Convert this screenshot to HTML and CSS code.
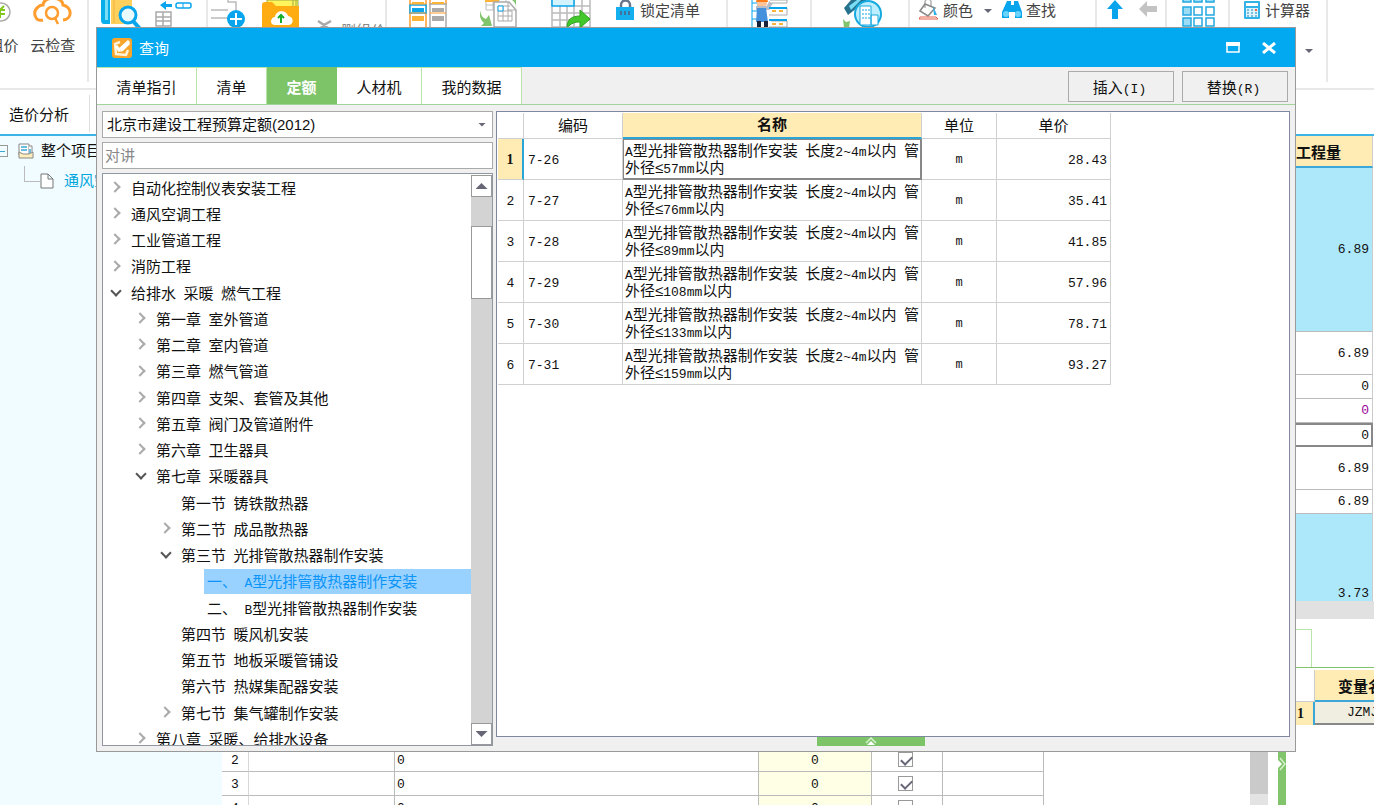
FILE: index.html
```html
<!DOCTYPE html>
<html lang="zh-CN">
<head>
<meta charset="utf-8">
<title>查询</title>
<link rel="stylesheet" href="styles.css">
</head>
<body>
<div class="app">
  <header class="ribbon">
    <div class="group g-check">
      <button class="big price"><svg width="20" height="28" viewBox="0 0 20 28"><circle cx="7" cy="12" r="9" fill="#fff" stroke="#aaa" stroke-width="1.500"/><path d="M2 10h9M2 14h9M3 6l3 4 4-4M6 10v8" stroke="#82c91e" stroke-width="2" fill="none"/></svg><span>组价</span></button>
      <button class="big"><svg width="40" height="28" viewBox="0 0 40 28"><path d="M10 20C2 22-1 12 5 7c2-2 4-2 5-2C10-4 30-4 30 5c9 2 10 14 0 15" fill="none" stroke="#ff9d2e" stroke-width="3"/><circle cx="19" cy="13" r="6" fill="none" stroke="#ff9d2e" stroke-width="2.500"/><path d="M22 18l3 6" stroke="#ff9d2e" stroke-width="2.500"/></svg><span>云检查</span></button>
    </div>
    <div class="group g-find">
      <svg width="40" height="28" viewBox="0 0 40 28"><path d="M0 0h9v24H3c-3 0-3-3-3-5z" fill="#08aeea"/><path d="M4 0h3v20H4z" fill="#7bdcf5"/><path d="M10 0h21v24H10z" fill="#ffd05c"/><path d="M13 0v23" stroke="#f3b33d"/><circle cx="27" cy="15" r="8" fill="#e9fbff" stroke="#08a5ed" stroke-width="3"/><path d="M32 21l7 8" stroke="#08a5ed" stroke-width="4"/></svg>
      <svg width="38" height="28" viewBox="0 0 38 28"><path d="M5 5l6-4v3h6v3h-6v3z" fill="#08a5ed"/><rect x="21" y="3" width="15" height="5" rx="2" fill="none" stroke="#08a5ed" stroke-width="1.500"/><path d="M28 3v5" stroke="#08a5ed"/><path d="M1 12h15v14H1zM8 12v14M1 17h15M1 21h15" fill="none" stroke="#aaa" stroke-width="1.500"/></svg>
    </div>
    <div class="group g-add">
      <svg width="36" height="28" viewBox="0 0 36 28"><path d="M2 0h20l5 7v15H2z" fill="#fff"/><path d="M27 14V2h-8V0M2 10h17M2 18h16" stroke="#bbb" fill="none" stroke-width="1.500"/><circle cx="27" cy="19" r="9" fill="#08a5ed"/><path d="M21 19h12M27 13v12" stroke="#fff" stroke-width="2"/></svg>
      <svg width="38" height="28" viewBox="0 0 38 28"><path d="M5 0h31v10H5z" fill="#fff45c" stroke="#99a944"/><path d="M31 0v7M34 0v7" stroke="#99a944"/><path d="M0 5q0-3 3-3h7l4 4h23v22H0z" fill="#ffac12"/><path d="M12 25c-5-1-3-8 1-8 1-8 12-7 13-1 6 0 6 9 1 9z" fill="#fff"/><path d="M19 23v-7M16 18l3-3 3 3" stroke="#16ae2a" stroke-width="2" fill="none"/></svg>
      <span class="sunk"><svg width="16" height="8" viewBox="0 0 16 8"><path d="M1 1l6 4 7-4M7 5l-3 3M7 5l4 3" stroke="#aaa" stroke-width="2.500" fill="none"/></svg><span>删组价</span></span>
    </div>
    <div class="group g-tools">
      <svg width="38" height="28" viewBox="0 0 38 28"><g fill="#fff" stroke="#ff9d2e" stroke-width="1.500"><path d="M1 -2h16v31H1zM21 -2h16v6H21z"/></g><path d="M21 4h16v25H21z" fill="#fff" stroke="#aaa" stroke-width="1.500"/><path d="M1 5h16v8H1z" fill="#fff" stroke="#08a5ed" stroke-width="1.500"/><path d="M1 4h16M21 13h16M1 13h16" stroke="#ff9d2e"/><path d="M3 2h12v2H3zM23 2h12v2H23zM3 16h12v5H3z" fill="#fbb437"/><path d="M3 8h12v4H3z" fill="#08a5ed"/><path d="M23 8h12v4H23zM23 16h12v5H23z" fill="#aaa"/></svg>
      <svg width="38" height="28" viewBox="0 0 38 28"><path d="M6 -1h20v11H6zM6 5h20M13 0v10M19 0v10" fill="#fff" stroke="#bbb"/><path d="M5 0h14v2H5z" fill="#fbb437"/><path d="M14 2h15l7 8v17H14z" fill="#fff" stroke="#aaa" stroke-width="1.500"/><path d="M28 2v8h8M18 6h12M18 11h14M18 16h14M18 21h14M18 6v15M23 6v15M28 9v12M32 11v10" fill="none" stroke="#aaa"/><path d="M18 6h5v5h-5z" fill="#fff" stroke="#08a5ed"/><path d="M0 10c1 6 3 8 6 9l3-4 3 11H1l3-3C0 20-1 14 0 10zM32 0q4 3 4 7V0z" fill="#82c46c"/></svg>
      <svg width="42" height="28" viewBox="0 0 42 28"><path d="M1 -1h38v28H1zM1 13h38M1 20h38M23 6h16M9 6v21M16 6v21M23 0v27M31 0v27" fill="#fff" stroke="#bbb" stroke-width="1.500"/><path d="M1 -1h22v7H1z" fill="#d3f4ff" stroke="#08a5ed" stroke-width="1.500"/><path d="M16 28c0-9 5-12 13-12v-6l10 9-10 9v-6c-5 0-9 1-13 6z" fill="#43c72c" stroke="#2ca51c"/></svg>
      <button class="tool"><svg width="18" height="20" viewBox="0 0 18 20"><path d="M5 8V5c0-6 9-6 9 0v3" stroke="#68758a" stroke-width="2.500" fill="none"/><rect y="7" width="18" height="13" fill="#13afee"/><path d="M4 11h2v4H4zM8 11h2v4H8zM12 11h2v4h-2z" fill="#41729b"/></svg><span>锁定清单</span></button>
    </div>
    <div class="group g-worker">
      <svg width="40" height="28" viewBox="0 0 40 28"><path d="M1 0v27M7 0v27M1 3h8M1 11h8M1 19h8" stroke="#08a5ed"/><circle cx="11" cy="3" r="5" fill="#ffc39a"/><path d="M5 2c0-6 12-6 12 0z" fill="#ff7d18"/><path d="M5 8h12l3-6" stroke="#b9bdca" stroke-width="4" fill="none"/><path d="M6 8h9l2 14H5z" fill="#4391dc"/><path d="M6 21h4v6H6zM13 21h4v6h-4z" fill="#18233a"/><path d="M19 0h17v3H19M20 8h16v7H18M20 21h16v6H18" fill="#fff" stroke="#aaa"/><path d="M18 8h18M18 20h18" stroke="#08a5ed" stroke-width="2"/><path d="M21 11h4M28 11h4M21 24h4M28 24h4" stroke="#fbb437" stroke-width="2"/></svg>
    </div>
    <div class="group g-build">
      <svg width="40" height="28" viewBox="0 0 40 28"><path d="M1 8L8 0h16L5 15z" fill="#27718d"/><path d="M6 6l8-6h4L8 10z" fill="#79ddf6"/><circle cx="25" cy="14" r="13" fill="#bbeeff" stroke="#16a9df" stroke-width="2"/><path d="M17 6h11v19H17zM28 15h7v10h-7z" fill="#fff" stroke="#16a9df"/><path d="M20 9v10M23 9v10M26 9v10" stroke="#16a9df" stroke-dasharray="2 2"/><path d="M0 19l3 3 4-1-1 7H1z" fill="#82c46c"/></svg>
    </div>
    <div class="group g-color">
      <button class="tool"><svg width="20" height="20" viewBox="0 0 20 20"><path d="M6 4L1 11l8 5 7-8z" fill="#fff" stroke="#888" stroke-width="1.500"/><path d="M6 8V1c0-2 6-2 6 0v6" fill="none" stroke="#888"/><path d="M14 6l4 9h-3z" fill="#2eaee8"/><path d="M1 17h16l2 2H0z" fill="#fff" stroke="#e35f4a"/></svg><span>颜色</span></button>
      <i class="caret"></i>
      <button class="tool"><svg width="20" height="18" viewBox="0 0 20 18"><path d="M5 0h4v4h3V0h4l4 11v6h-7v-6H7v6H0v-6z" fill="#08a5ed"/><circle cx="4" cy="13" r="3" fill="#6bd4fa"/><circle cx="16" cy="13" r="3" fill="#6bd4fa"/></svg><span>查找</span></button>
    </div>
    <div class="group g-arrows">
      <svg width="18" height="20" viewBox="0 0 18 20"><path d="M9 0l8 9h-5v10H6V9H1z" fill="#08a5ed"/></svg>
      <svg width="20" height="20" viewBox="0 0 20 20"><path d="M1 9l8-8v5h10v6H9v5z" fill="#c3c3c3"/></svg>
    </div>
    <div class="group g-grid">
      <svg width="33" height="28" viewBox="0 0 33 28"><g fill="#fff" stroke="#23a8e1" stroke-width="1.500"><path d="M1 -4h8v6H1z" fill="#9bdcf6"/><path d="M12 -4h8v6h-8zM24 -4h8v6h-8z" fill="#9bdcf6"/><rect x="1" y="7" width="8" height="8" fill="#9bdcf6"/><rect x="12" y="7" width="8" height="8"/><rect x="24" y="7" width="8" height="8"/><rect x="1" y="18" width="8" height="8" fill="#9bdcf6"/><rect x="12" y="18" width="8" height="8"/><rect x="24" y="18" width="8" height="8"/></g></svg>
    </div>
    <div class="group g-calc">
      <button class="tool"><svg width="16" height="18" viewBox="0 0 16 18"><rect width="16" height="18" rx="1" fill="#33b2e8"/><path d="M2 2h12v3H2z" fill="#fff"/><path d="M2 7h12v9H2z" fill="#ddf5ff"/><path d="M3 9h10M3 12h10M3 15h10" stroke="#2183b9" stroke-dasharray="2 2"/><path d="M11 8h2v2h-2z" fill="#ea5a49"/></svg><span>计算器</span></button>
      <i class="caret more"></i>
    </div>
  </header>
  <nav class="subtabs"><button>造价分析</button></nav>
  <main class="workspace">
    <aside class="project">
      <div class="node"><i class="minus"></i><svg width="16" height="16" viewBox="0 0 16 16"><path d="M1 1h10v11H1z" fill="#fff" stroke="#888"/><path d="M11 3h3v9h-3" fill="#fff" stroke="#888"/><path d="M3 4h6M3 7h6M12 6v4" stroke="#3aa7d8" stroke-width="1.500"/><path d="M1 9v6h14V9l-4 2H5z" fill="#fff0bb" stroke="#888"/></svg><span>整个项目</span></div>
      <div class="node child"><i class="elbow"></i><svg width="14" height="16" viewBox="0 0 14 16"><path d="M1 1h7l5 5v9H1zM8 1v5h5" fill="#fff" stroke="#777"/></svg><span>通风空调</span></div>
    </aside>
    <section class="sheets">
      <table class="quantity">
        <tr class="qh"><th>工程量</th></tr>
        <tr class="q-tall"><td>6.89</td></tr>
        <tr class="q-mid"><td>6.89</td></tr>
        <tr class="q-low"><td>0</td></tr>
        <tr class="q-low purple"><td>0</td></tr>
        <tr class="q-low current"><td>0</td></tr>
        <tr class="q-mid"><td>6.89</td></tr>
        <tr class="q-low"><td>6.89</td></tr>
        <tr class="q-last"><td>3.73</td></tr>
      </table>
      <div class="hscroll"></div>
      <div class="lower">
        <div class="detail">
          <table class="lines">
            <colgroup><col class="l1"><col class="l2"><col class="l3"><col class="l4"><col class="l5"><col class="l6"></colgroup>
            <tr><th>2</th><td></td><td>0</td><td class="amount">0</td><td class="tick"><input type="checkbox" checked aria-label="第2行"></td><td></td></tr>
            <tr><th>3</th><td></td><td>0</td><td class="amount">0</td><td class="tick"><input type="checkbox" checked aria-label="第3行"></td><td></td></tr>
            <tr><th>4</th><td></td><td>0</td><td class="amount">0</td><td class="tick"><input type="checkbox" checked aria-label="第4行"></td><td></td></tr>
          </table>
          <div class="vscroll"><i></i></div>
          <button class="splitter" aria-label="展开"><svg width="8" height="14" viewBox="0 0 8 14"><path d="M0 3l4 4-4 4z" fill="#fff"/><path d="M2 1l5 6-5 6" fill="none" stroke="#d5f2cb" stroke-width="1.500"/></svg></button>
        </div>
        <div class="variables">
          <div class="vtab"></div>
          <table class="vars">
            <tr><th class="corner"></th><th class="vname">变量名</th></tr>
            <tr><th class="vnum">1</th><td>JZMJ</td></tr>
          </table>
        </div>
      </div>
    </section>
  </main>
</div>

<div class="dialog" role="dialog" aria-label="查询">
  <div class="titlebar">
    <svg width="20" height="20" viewBox="0 0 20 20"><rect width="20" height="20" rx="3" fill="#f7a52b"/><path d="M8 4L3 6l1 10 10 1 2-5" fill="none" stroke="#fff3da" stroke-width="2.500"/><path d="M4 8l3 4L17 3" fill="none" stroke="#fff" stroke-width="3"/><path d="M8 14l2-4 7-6 1 2-7 7z" fill="#fff"/></svg>
    <span class="title">查询</span>
    <button class="win" aria-label="最大化"><svg width="14" height="12" viewBox="0 0 14 12"><path d="M1 1h12v9H1z" fill="none" stroke="#fff" stroke-width="1.500"/><path d="M0 0h14v4H0z" fill="#fff"/></svg></button>
    <button class="win" aria-label="关闭"><svg width="14" height="12" viewBox="0 0 14 12"><path d="M1 1l12 10M13 1L1 11" stroke="#fff" stroke-width="3"/></svg></button>
  </div>
  <div class="tabbar">
    <button class="tab t100">清单指引</button><button class="tab t70">清单</button><button class="tab t70 active">定额</button><button class="tab t84">人材机</button><button class="tab t100">我的数据</button>
    <div class="actions"><button>插入<span class="key">(I)</span></button><button>替换<span class="key">(R)</span></button></div>
  </div>
  <div class="content">
    <div class="catalog">
      <div class="picker"><select aria-label="定额库"><option>北京市建设工程预算定额(2012)</option></select><i class="caret"></i></div>
      <input class="search" type="text" placeholder="对讲" aria-label="搜索">
      <div class="treebox">
        <ul class="tree">
          <li><i class="arrow"></i>自动化控制仪表安装工程</li>
          <li><i class="arrow"></i>通风空调工程</li>
          <li><i class="arrow"></i>工业管道工程</li>
          <li><i class="arrow"></i>消防工程</li>
          <li><i class="arrow open"></i>给排水&ensp;采暖&ensp;燃气工程</li>
          <li class="d1"><i class="arrow"></i>第一章&ensp;室外管道</li>
          <li class="d1"><i class="arrow"></i>第二章&ensp;室内管道</li>
          <li class="d1"><i class="arrow"></i>第三章&ensp;燃气管道</li>
          <li class="d1"><i class="arrow"></i>第四章&ensp;支架、套管及其他</li>
          <li class="d1"><i class="arrow"></i>第五章&ensp;阀门及管道附件</li>
          <li class="d1"><i class="arrow"></i>第六章&ensp;卫生器具</li>
          <li class="d1"><i class="arrow open"></i>第七章&ensp;采暖器具</li>
          <li class="d2"><i class="arrow none"></i>第一节&ensp;铸铁散热器</li>
          <li class="d2"><i class="arrow"></i>第二节&ensp;成品散热器</li>
          <li class="d2"><i class="arrow open"></i>第三节&ensp;光排管散热器制作安装</li>
          <li class="d3"><span class="leaf selected">一、&ensp;<b>A</b>型光排管散热器制作安装</span></li>
          <li class="d3"><span class="leaf">二、&ensp;<b>B</b>型光排管散热器制作安装</span></li>
          <li class="d2"><i class="arrow none"></i>第四节&ensp;暖风机安装</li>
          <li class="d2"><i class="arrow none"></i>第五节&ensp;地板采暖管铺设</li>
          <li class="d2"><i class="arrow none"></i>第六节&ensp;热媒集配器安装</li>
          <li class="d2"><i class="arrow"></i>第七节&ensp;集气罐制作安装</li>
          <li class="d1"><i class="arrow"></i>第八章&ensp;采暖、给排水设备</li>
        </ul>
        <div class="bar"><button class="step up" aria-label="向上"></button><i class="thumb"></i><button class="step down" aria-label="向下"></button></div>
      </div>
    </div>
    <div class="results">
      <div class="pane">
        <table class="quota">
          <colgroup><col class="c1"><col class="c2"><col class="c3"><col class="c4"><col class="c5"></colgroup>
          <thead><tr><th></th><th>编码</th><th class="lead">名称</th><th>单位</th><th>单价</th></tr></thead>
          <tbody>
            <tr class="on"><th>1</th><td>7-26</td><td class="name"><span>A</span>型光排管散热器制作安装&ensp;长度<span>2~4m</span>以内&ensp;管外径≤<span>57mm</span>以内</td><td class="unit">m</td><td class="cost">28.43</td></tr>
            <tr><th>2</th><td>7-27</td><td class="name"><span>A</span>型光排管散热器制作安装&ensp;长度<span>2~4m</span>以内&ensp;管外径≤<span>76mm</span>以内</td><td class="unit">m</td><td class="cost">35.41</td></tr>
            <tr><th>3</th><td>7-28</td><td class="name"><span>A</span>型光排管散热器制作安装&ensp;长度<span>2~4m</span>以内&ensp;管外径≤<span>89mm</span>以内</td><td class="unit">m</td><td class="cost">41.85</td></tr>
            <tr><th>4</th><td>7-29</td><td class="name"><span>A</span>型光排管散热器制作安装&ensp;长度<span>2~4m</span>以内&ensp;管外径≤<span>108mm</span>以内</td><td class="unit">m</td><td class="cost">57.96</td></tr>
            <tr><th>5</th><td>7-30</td><td class="name"><span>A</span>型光排管散热器制作安装&ensp;长度<span>2~4m</span>以内&ensp;管外径≤<span>133mm</span>以内</td><td class="unit">m</td><td class="cost">78.71</td></tr>
            <tr><th>6</th><td>7-31</td><td class="name"><span>A</span>型光排管散热器制作安装&ensp;长度<span>2~4m</span>以内&ensp;管外径≤<span>159mm</span>以内</td><td class="unit">m</td><td class="cost">93.27</td></tr>
          </tbody>
        </table>
      </div>
      <button class="handle" aria-label="展开"><svg width="12" height="8" viewBox="0 0 12 8"><path d="M1 6l5-5 5 5" fill="none" stroke="#d5f2cb" stroke-width="1.500"/><path d="M2 8l4-4 4 4z" fill="#fff"/></svg></button>
    </div>
  </div>
</div>
</body>
</html>
```

FILE: styles.css
```css
* { box-sizing: border-box; }
html, body { margin: 0; height: 100%; overflow: hidden; }
body, button, input, select {
  font-family: "Liberation Sans", "Noto Sans CJK SC", sans-serif;
  font-size: 15px;
  color: #111;
}
button { padding: 0; border: 0; background: none; }
svg { display: block; flex: none; }
table { border-collapse: separate; border-spacing: 0; table-layout: fixed; }
th, td { padding: 0; font-weight: normal; }

.app { height: 100vh; display: flex; flex-direction: column; background: #fff; overflow: hidden; }

/* ribbon */
.ribbon { display: flex; flex: none; height: 90px; border-bottom: 2px solid #e8e8e8; overflow: hidden; }
.ribbon button, .sunk { color: #444; }
.group { display: flex; align-items: flex-start; flex: none; height: 82px; border-right: 2px solid #e8e8e8; }
.g-check { width: 89px; }
.big { display: flex; flex-direction: column; align-items: center; gap: 7px; width: 70px; line-height: 22px; white-space: nowrap; }
.big.price { width: 19px; align-items: flex-end; overflow: hidden; }
.price svg { margin-right: 5px; }
.g-find { width: 119px; padding-left: 12px; gap: 14px; }
.g-add { width: 179px; padding-left: 1px; gap: 17px; }
.sunk { display: flex; align-items: flex-start; gap: 8px; padding-top: 20px; color: #888; line-height: 22px; white-space: nowrap; }
.g-tools { width: 341px; padding-left: 22px; gap: 33px; }
.tool { display: flex; align-items: center; gap: 6px; height: 20px; line-height: 20px; white-space: nowrap; }
.tool span { padding-top: 2px; }
.g-tools .tool { margin-left: -10px; }
.g-worker { width: 84px; padding-left: 23px; }
.g-build { width: 98px; padding-left: 31px; }
.g-color { width: 187px; padding-left: 9px; gap: 9px; }
.g-color .tool { gap: 4px; }
.g-arrows { width: 70px; padding-left: 9px; gap: 14px; }
.g-grid { width: 63px; padding-left: 15px; }
.g-calc { width: 98px; padding-left: 14px; }
.g-calc .tool { gap: 5px; }
.caret { width: 8px; height: 4px; background: #667; clip-path: polygon(0 0, 100% 0, 50% 100%); }
.g-color .caret { margin-top: 9px; margin-left: 2px; margin-right: 1px; }
.more { margin-top: 49px; margin-left: -5px; }

.subtabs { flex: none; height: 44px; padding-top: 5px; }
.subtabs button { width: 90px; height: 37px; padding-right: 11px; border-right: 1px solid #ddd; }
.workspace { display: flex; flex: 1; min-height: 0; border-top: 2px solid #3db4e8; }
.project { flex: none; width: 222px; background: #f0fcff; }
.node { display: flex; align-items: center; height: 30px; gap: 7px; white-space: nowrap; }
.node span { padding-bottom: 3px; }
.minus { width: 8px; height: 12px; margin-right: 3px; border: 1px solid #999; border-left: 0; background: linear-gradient(#3aa7d8, #3aa7d8) 0 5px / 5px 1px no-repeat; }
.child { gap: 10px; color: #00a5dc; }
.elbow { width: 16px; height: 16px; margin-left: 24px; margin-top: -14px; border-left: 1px solid #bbb; border-bottom: 1px solid #bbb; }
.child svg { margin-left: -10px; }

.sheets { flex: 1; min-width: 0; display: flex; flex-direction: column; }
.quantity { width: 108px; margin: 0 1px 0 auto; }
.quantity th { height: 32px; font-weight: bold; background: #ffebb4; border-bottom: 2px solid #3aa7d8; border-right: 1px solid #ccc; }
.quantity td, .lines, .vars td, .quota tbody { font-family: "Liberation Mono", "Noto Sans CJK SC", monospace; font-size: 13px; }
.quantity td { padding-right: 3px; text-align: right; border-bottom: 1px solid #bbb; border-right: 1px solid #ccc; }
.q-tall td { height: 164px; background: #ade8fa; }
.q-mid td { height: 43px; }
.q-low td { height: 24px; }
.quantity .q-last td { height: 87px; padding-top: 72px; line-height: 14px; background: #ade8fa; border-bottom: 0; }
.quantity .purple td { color: #909; }
.quantity .current td { border: 2px solid #888; padding-right: 2px; }
.hscroll { flex: none; height: 18px; background: #e1e1e1; }
.lower { display: flex; flex: 1; min-height: 0; }
.detail { display: flex; flex: 1; padding-top: 129px; overflow: hidden; }
.lines { width: 822px; flex: none; }
.l1 { width: 27px; } .l2 { width: 146px; } .l3 { width: 364px; } .l4 { width: 113px; } .l5 { width: 71px; } .l6 { width: 101px; }
.lines th, .lines td { height: 24px; padding-top: 2px; border-right: 1px solid #bbb; border-bottom: 1px solid #bbb; }
.lines td { padding-left: 2px; }
.lines th { border-right-color: #d8d8d8; }
.lines .amount { background: #ffffe6; text-align: center; padding-left: 0; }
.lines .tick { padding: 0 4px 0 0; }
.tick input { appearance: none; display: block; width: 15px; height: 15px; margin: 0 auto; border: 1px solid #999; background: #fff; }
.tick input:checked::before { content: ""; display: block; width: 9px; height: 5px; margin: 3px 2px; border-left: 2px solid #667; border-bottom: 2px solid #667; transform: rotate(-45deg); }
.vscroll { width: 18px; height: 100%; margin-left: auto; background: #e3e3e3; }
.vscroll i { display: block; height: 46px; background: #cacaca; }
.splitter { display: flex; align-items: flex-start; width: 8px; height: 100%; margin-left: 10px; padding-top: 9px; background: #82c46c; }
.variables { flex: none; width: 88px; padding-top: 10px; overflow: hidden; }
.vtab { width: 26px; height: 38px; border: 1px solid #b9e5a8; border-bottom: 0; }
.vars { width: 120px; border-top: 1px solid #82c46c; padding-top: 2px; }
.corner { width: 29px; height: 32px; border-bottom: 1px solid #ccc; border-right: 1px solid #ccc; }
.vname { font-weight: bold; background: #ffebb4; border-bottom: 2px solid #3aa7d8; }
.vnum { height: 23px; padding-left: 2px; font: bold 14px "Liberation Serif", serif; background: #ffebb4; border-right: 2px solid #3aa7d8; }
.vars td { padding-left: 4px; text-align: center; background: #efeee0; border-bottom: 2px solid #888; }

/* dialog */
.dialog { position: absolute; left: 96px; top: 27px; right: 78px; bottom: 53px; display: flex; flex-direction: column; background: #f0f0f0; border: 1px solid #999; }
.titlebar { display: flex; align-items: center; flex: none; height: 39px; padding: 0 19px 0 15px; background: #02a9f1; color: #fff; }
.title { flex: 1; margin-left: 7px; }
.win { margin-left: 22px; }
.tabbar { display: flex; flex: none; height: 38px; border-bottom: 1px solid #a3d39c; }
.tab { border-right: 1px solid #b9e5a8; border-top: 1px solid #b9e5a8; background: #fff; }
.t100 { width: 100px; } .t70 { width: 70px; } .t84 { width: 85px; }
.tab.active { background: #7dc368; color: #fff; font-weight: bold; border-color: #7dc368; }
.actions { display: flex; gap: 8px; margin-left: auto; padding: 4px 7px 2px 0; }
.actions button { width: 106px; padding-right: 3px; border: 1px solid #aaa; }
.key { font: 13px "Liberation Mono", monospace; }
.content { display: flex; flex: 1; min-height: 0; gap: 3px; padding: 6px 5px 5px; }
.catalog { display: flex; flex-direction: column; flex: none; width: 391px; gap: 4px; }
.picker { display: flex; align-items: center; flex: none; height: 27px; padding-right: 6px; border: 1px solid #aaa; background: #fff; }
.picker select { flex: 1; appearance: none; height: 24px; padding: 0 0 0 4px; border: 0; background: #fff; }
.search { flex: none; height: 27px; padding: 0 2px; border: 1px solid #aaa; background: #fff; }
.search::placeholder { color: #888; }
.treebox { display: flex; flex: 1; min-height: 0; padding: 1px 0 0 1px; border: 1px solid #8f97a3; background: #fff; }
.tree { flex: 1; height: 100%; margin: 0; padding: 0; list-style: none; overflow: hidden; }
.tree li { display: flex; align-items: center; height: 26px; padding: 0 0 2px 4px; white-space: nowrap; }
.tree li:nth-child(4n) { height: 27px; }
.tree .d1 { padding-left: 29px; }
.tree .d2 { padding-left: 54px; }
.tree .d3 { padding: 0 0 0 100px; }
.tree b { font: 13px "Liberation Mono", monospace; }
.arrow { flex: none; width: 8px; height: 8px; margin: 0 12px 0 3px; border-top: 2px solid #aaa; border-right: 2px solid #aaa; transform: rotate(45deg); }
.arrow.open { margin: -3px 11px 0 4px; border-color: #555; transform: rotate(135deg); }
.arrow.none { visibility: hidden; }
.leaf { flex: 1; height: 25px; line-height: 25px; padding-left: 3px; }
.selected { background: #99d1ff; color: #0c95f8; }
.bar { display: flex; flex-direction: column; flex: none; width: 21px; background: #d3d3d3; }
.step { height: 22px; border: 1px solid #999; background: #fff; }
.step::before { content: ""; display: block; width: 12px; height: 6px; margin: 0 auto; background: #667; clip-path: polygon(50% 0, 100% 100%, 0 100%); }
.step.down { margin-top: auto; }
.step.down::before { clip-path: polygon(0 0, 100% 0, 50% 100%); }
.thumb { height: 73px; margin-top: 29px; border: 1px solid #999; background: #fff; }

.results { display: flex; flex: 1; flex-direction: column; min-width: 0; }
.pane { flex: 1; min-height: 0; padding: 1px; border: 1px solid #8088a0; background: #fff; overflow: hidden; }
.handle { display: flex; justify-content: center; flex: none; width: 108px; height: 9px; margin-left: 321px; background: #7dc368; }
.quota { width: 613px; }
.c1 { width: 26px; } .c2 { width: 99px; } .c3 { width: 299px; } .c4 { width: 75px; } .c5 { width: 114px; }
.quota th, .quota td { border-right: 1px solid #d0d0d0; border-bottom: 1px solid #d0d0d0; }
.quota thead th { height: 26px; line-height: 22px; }
.quota thead .lead { font-weight: bold; background: #ffebb4; border-bottom: 2px solid #2ba5d5; }
.quota tbody th, .quota tbody td { height: 41px; padding-top: 2px; }
.quota td { padding-left: 4px; }
.quota tbody .name { padding: 0 0 0 2px; font-family: "Liberation Sans", "Noto Sans CJK SC", sans-serif; font-size: 15px; line-height: 17px; }
.name span { font: 13px/13px "Liberation Mono", monospace; }
.quota .unit { padding-left: 0; text-align: center; font-size: 12px; }
.quota .cost { padding-right: 3px; text-align: right; }
.quota .on th { font: bold 14px "Liberation Serif", serif; background: #ffebb4; border-right: 2px solid #2ba5d5; }
.quota .on .name { box-shadow: inset 0 0 0 1px #888; border-color: #888; }
```
